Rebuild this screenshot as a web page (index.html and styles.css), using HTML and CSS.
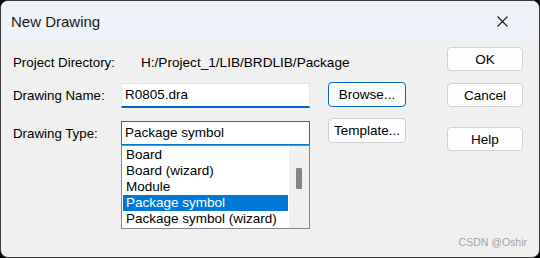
FILE: index.html
```html
<!DOCTYPE html>
<html lang="en">
<head>
    <meta charset="UTF-8">
    <title>New Drawing</title>
    <link rel="stylesheet" href="styles.css">
</head>
<body>
    <div class="window">
        <div class="titlebar">
            <span class="title">New Drawing</span>
            <span class="close">
                <svg width="11" height="11" viewBox="0 0 11 11">
                    <path d="M0.5 0.5 L10.5 10.5 M10.5 0.5 L0.5 10.5" stroke="#1c1c1c" stroke-width="1.1" fill="none"/>
                </svg>
            </span>
        </div>

        <div class="content">
            <!-- Form fields -->
            <div class="form">
                <div class="row row-dir">
                    <span class="label label-dir">Project Directory:</span>
                    <span class="value">H:/Project_1/LIB/BRDLIB/Package</span>
                </div>

                <div class="row row-name">
                    <span class="label">Drawing Name:</span>
                    <div class="field field-name">R0805.dra</div>
                    <button class="btn btn-default">Browse...</button>
                </div>

                <div class="row row-type">
                    <span class="label">Drawing Type:</span>
                    <div class="combo">
                        <div class="field field-type">Package symbol</div>
                        <div class="list">
                            <div class="items">
                                <div class="item">Board</div>
                                <div class="item">Board (wizard)</div>
                                <div class="item">Module</div>
                                <div class="item selected">Package symbol</div>
                                <div class="item">Package symbol (wizard)</div>
                            </div>
                            <div class="scrollbar">
                                <div class="thumb"></div>
                            </div>
                        </div>
                    </div>
                    <button class="btn">Template...</button>
                </div>
            </div>

            <!-- Dialog buttons -->
            <div class="actions">
                <button class="btn btn-side">OK</button>
                <button class="btn btn-side">Cancel</button>
                <button class="btn btn-side btn-help">Help</button>
            </div>
        </div>

        <div class="watermark">CSDN @Oshir</div>
    </div>
</body>
</html>
```

FILE: styles.css
```css
body {
    margin: 0;
    background: #000;
    font-family: 'Liberation Sans', Arial, sans-serif;
}

.window {
    position: relative;
    width: 540px;
    height: 258px;
    box-sizing: border-box;
    border: 1px solid #3a3a3a;
    border-radius: 8px;
    background: #f0f0f0;
    overflow: hidden;
}

.titlebar {
    height: 38px;
    background: #eef2f9;
    display: flex;
    align-items: center;
    justify-content: space-between;
    padding: 0 31px 0 10px;
}

.title {
    font-size: 15px;
    color: #1a1a1a;
    margin-top: 2px;
}

.close {
    display: flex;
    margin-top: 2px;
}

.content {
    display: flex;
    justify-content: space-between;
    padding: 0 16px 0 12px;
}

.form {
    display: flex;
    flex-direction: column;
    padding-top: 11px;
}

.row {
    display: flex;
    align-items: flex-start;
}

.label {
    width: 108px;
    font-size: 13.3px;
    color: #000;
}

.row-dir {
    height: 24px;
    align-items: center;
}

.label-dir {
    width: 128px;
}

.value {
    font-size: 13.6px;
    color: #000;
}

.row-name {
    margin-top: 8px;
}

.row-name .label {
    margin-top: 6px;
}

.row-type {
    margin-top: 10px;
}

.row-type .label {
    margin-top: 8px;
}

.field {
    width: 189px;
    box-sizing: border-box;
    background: #fff;
    font-size: 13.5px;
    color: #000;
    padding-left: 3px;
}

.field-name {
    height: 25px;
    margin-top: 1px;
    border: 1px solid #e3e3e3;
    border-bottom: 2px solid #0067c0;
    line-height: 21px;
}

.combo {
    margin-top: 3px;
}

.field-type {
    height: 24px;
    border: 1px solid #0078d7;
    line-height: 22px;
}

.list {
    width: 189px;
    height: 84px;
    box-sizing: border-box;
    border: 1px solid #828790;
    background: #fff;
    display: flex;
    padding: 1px 0 1px 1px;
}

.items {
    flex: 1;
}

.item {
    height: 16px;
    line-height: 16px;
    font-size: 13.5px;
    color: #000;
    padding-left: 3px;
    margin-right: 1px;
}

.item.selected {
    background: #0078d7;
    color: #fff;
}

.scrollbar {
    width: 20px;
    margin-top: -1px;
    margin-bottom: -1px;
    background: #f0f0f0;
    display: flex;
    justify-content: center;
    padding-top: 22px;
    box-sizing: border-box;
}

.thumb {
    width: 6px;
    height: 21px;
    background: #858585;
    border-radius: 1px;
}

.btn {
    width: 78px;
    height: 25px;
    margin-left: 18px;
    box-sizing: border-box;
    border: 1px solid #d0d0d0;
    border-radius: 4px;
    background: #fdfdfd;
    font-family: 'Liberation Sans', Arial, sans-serif;
    font-size: 13.5px;
    color: #000;
    padding: 0;
}

.btn-default {
    border-color: #0067c0;
}

.actions {
    display: flex;
    flex-direction: column;
    padding-top: 8px;
}

.btn-side {
    width: 76px;
    height: 24px;
    margin-left: 0;
    margin-bottom: 12px;
}

.btn-help {
    margin-top: 8px;
}

.watermark {
    position: absolute;
    right: 12px;
    bottom: 9px;
    font-size: 10.5px;
    color: #a3a3a3;
}
```
